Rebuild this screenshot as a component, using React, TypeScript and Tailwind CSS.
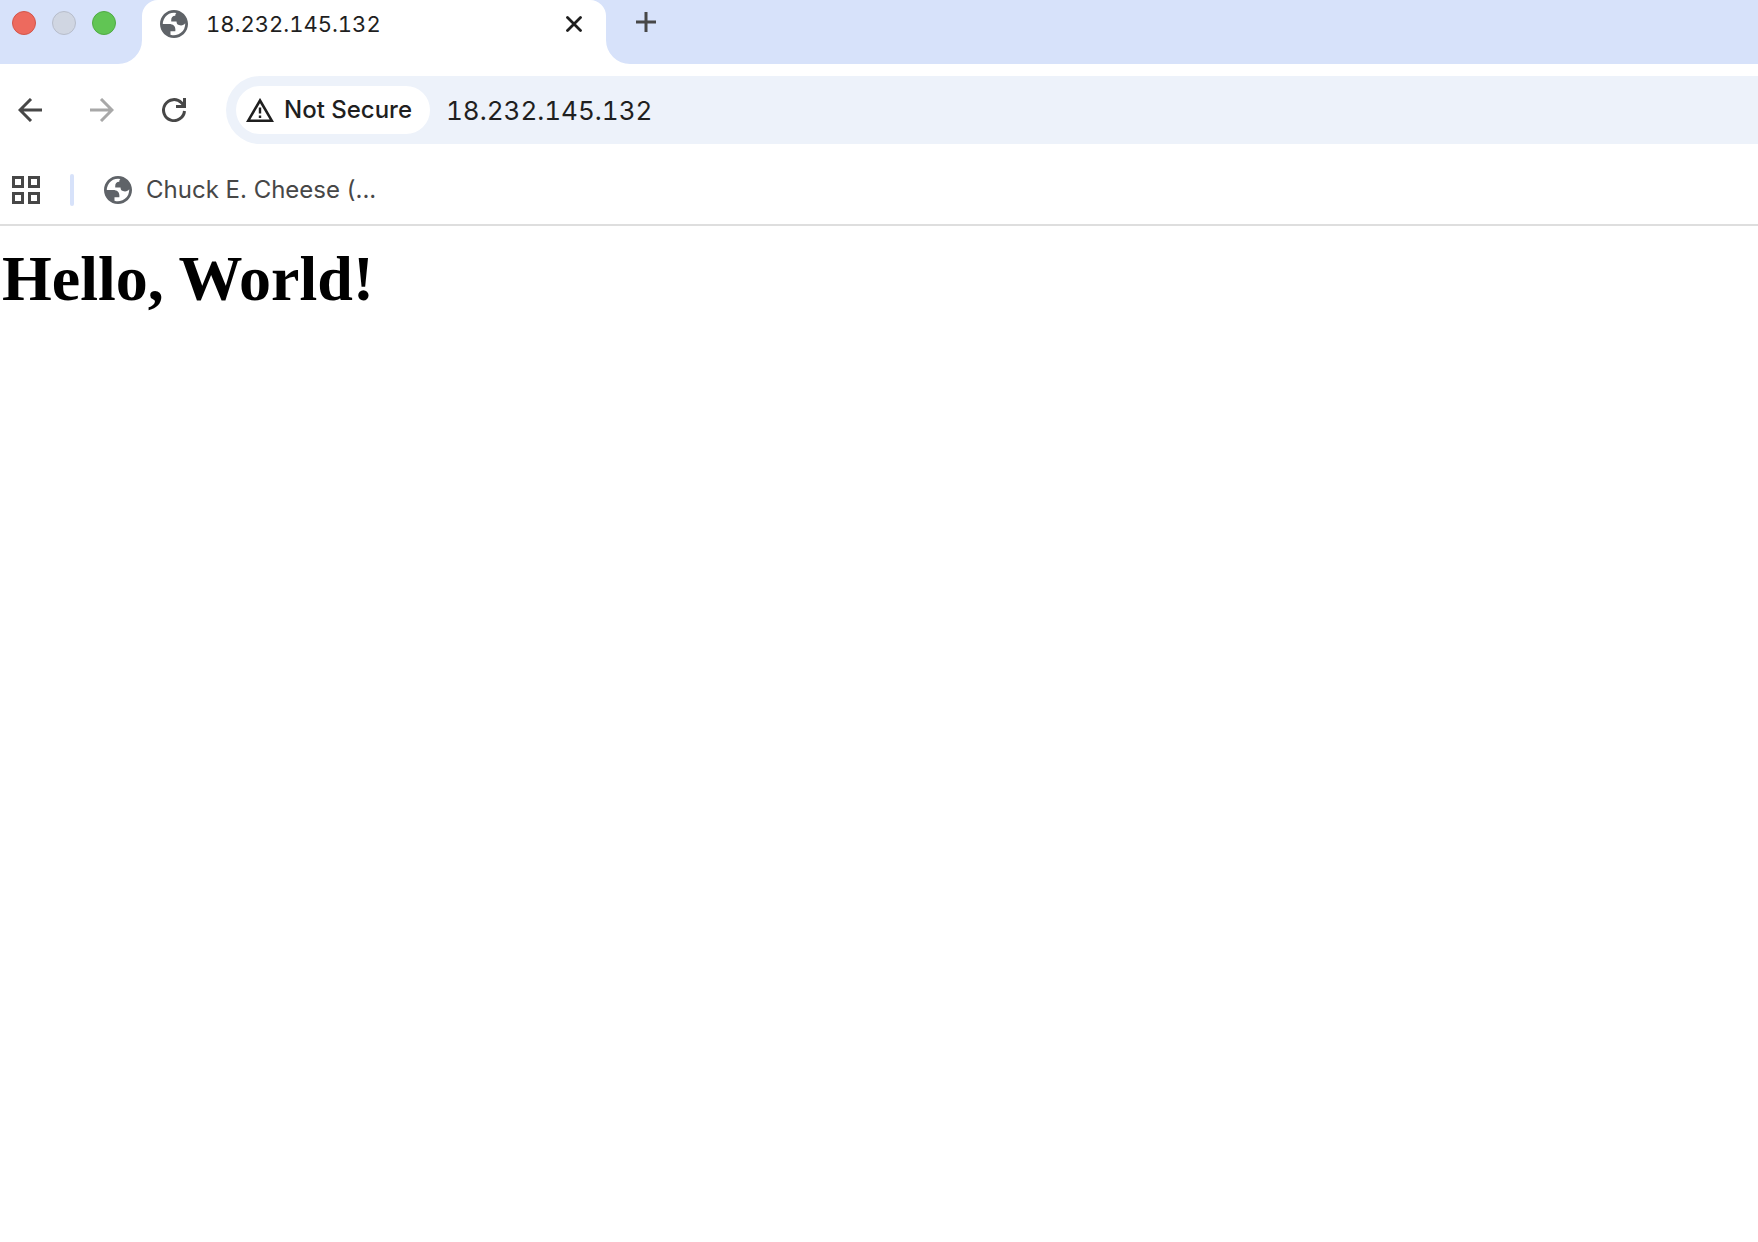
import React from "react";

function Globe() {
  return (
    <svg viewBox="2 2 20 20" className="size-7 shrink-0" aria-hidden="true" fill="#5f6368" fillRule="evenodd">
      <path d="M12 2c5.520 0 10 4.480 10 10s-4.480 10-10 10S2 17.520 2 12 6.480 2 12 2zM4 12h4.400c3.407.022 4.922 1.730 4.543 5.127H9.488v2.470a8.004 8.004 0 0 0 10.498-8.083C19.327 12.504 18.332 13 17 13c-2.137 0-3.206-.916-3.206-2.750h-3.748c-.274-2.728.683-4.092 2.870-4.092 0-.975.327-1.597.811-1.970A8.004 8.004 0 0 0 4 12z" />
    </svg>
  );
}

function TrafficLight({ label, color }: { label: string; color: string }) {
  return <button aria-label={label} className={`size-6 rounded-full border ${color}`} />;
}

function TabStrip() {
  return (
    <header className="flex h-16 bg-[#d7e2fa]">
      <div className="flex h-[46px] w-[142px] shrink-0 items-center gap-4 pl-3">
        <TrafficLight label="Close window" color="bg-[#ed6a5e] border-[#d35549]" />
        <TrafficLight label="Minimize window" color="bg-[#d0d6e2] border-[#b7bdcb]" />
        <TrafficLight label="Zoom window" color="bg-[#61c554] border-[#4fab43]" />
      </div>
      <div className="relative flex w-[464px] shrink-0 items-start rounded-t-[16px] bg-white">
        <svg viewBox="0 0 24 24" className="absolute bottom-0 -left-6 size-6" aria-hidden="true">
          <path d="M24 0V24H0A24 24 0 0 0 24 0Z" fill="#fff" />
        </svg>
        <svg viewBox="0 0 24 24" className="absolute -right-6 bottom-0 size-6" aria-hidden="true">
          <path d="M0 0V24H24A24 24 0 0 1 0 0Z" fill="#fff" />
        </svg>
        <div className="flex h-12 flex-1 items-center pr-6 pl-[18px]">
          <Globe />
          <span className="ml-[18px] flex-1 text-[22px] text-[#1f1f1f] tabular-nums">18.232.145.132</span>
          <button aria-label="Close tab">
            <svg viewBox="0 0 16 16" className="size-4" fill="none" stroke="#1f1f1f" strokeWidth="2.800" strokeLinecap="round">
              <path d="M1.500 1.500L14.500 14.500M14.500 1.500L1.500 14.500" />
            </svg>
          </button>
        </div>
      </div>
      <button aria-label="New tab" className="ml-[30px] flex h-11 items-center">
        <svg viewBox="0 0 20 20" className="size-5" fill="none" stroke="#474747" strokeWidth="3">
          <path d="M10 0V20M0 10H20" />
        </svg>
      </button>
    </header>
  );
}

function Toolbar() {
  return (
    <div className="flex h-[92px] items-center pl-[18px]">
      <button aria-label="Back">
        <svg viewBox="0 0 24 24" className="size-6" fill="none" stroke="#474747" strokeWidth="3">
          <path d="M13 1L2 12L13 23M2 12H24" />
        </svg>
      </button>
      <button aria-label="Forward" disabled className="ml-12">
        <svg viewBox="0 0 24 24" className="size-6" fill="none" stroke="#a8a8a8" strokeWidth="3">
          <path d="M11 1L22 12L11 23M22 12H0" />
        </svg>
      </button>
      <button aria-label="Reload" className="ml-12">
        <svg viewBox="0 0 24 24" className="size-6" fill="none" stroke="#474747" strokeWidth="3">
          <path d="M22.500 13A10.500 10.500 0 1 1 19.500 4.700L22 7.500M22.500 0V8.500H14" />
        </svg>
      </button>
      <div className="ml-10 flex h-[68px] flex-1 items-center rounded-l-full bg-[#edf2fa] pl-[10px]">
        <button className="flex h-12 w-[194px] shrink-0 items-center gap-[10px] rounded-full bg-white pl-[10px] text-[24px] font-medium whitespace-nowrap text-[#1f1f1f]">
          <svg viewBox="0 0 28 24" className="h-6 w-7 shrink-0" aria-hidden="true">
            <path d="M14 2.500L25.800 22.700H2.200Z" fill="none" stroke="#1f1f1f" strokeWidth="2.600" />
            <path d="M14 9.500V15.500M14 17.500V20" stroke="#1f1f1f" strokeWidth="2.400" />
          </svg>
          Not Secure
        </button>
        <input
          aria-label="Address and search bar"
          defaultValue="18.232.145.132"
          className="ml-4 min-w-0 flex-1 bg-transparent text-[26px] text-[#1f1f1f] tabular-nums outline-none"
        />
      </div>
    </div>
  );
}

function BookmarksBar() {
  return (
    <nav className="flex h-[70px] items-center border-b-2 border-[#dedede] pl-3">
      <button aria-label="Apps">
        <svg viewBox="0 0 28 28" className="size-7" fill="none" stroke="#474747" strokeWidth="3">
          <path d="M1.500 1.500H10.500V10.500H1.500ZM17.500 1.500H26.500V10.500H17.500ZM1.500 17.500H10.500V26.500H1.500ZM17.500 17.500H26.500V26.500H17.500Z" />
        </svg>
      </button>
      <span className="ml-[30px] h-8 w-1 rounded-full bg-[#d7e2fa]" />
      <a href="#" className="ml-[30px] flex items-center gap-[14px] text-[24px] text-[#474747]">
        <Globe />
        Chuck E. Cheese (...
      </a>
    </nav>
  );
}

export default function App() {
  return (
    <div className="min-h-screen overflow-x-hidden bg-white font-['Inter',sans-serif]">
      <TabStrip />
      <Toolbar />
      <BookmarksBar />
      <main className="pt-[17px] pl-[2px]">
        <h1 className="font-['Liberation_Serif',serif] text-[64px] leading-[72px] font-bold text-black">Hello, World!</h1>
      </main>
    </div>
  );
}
